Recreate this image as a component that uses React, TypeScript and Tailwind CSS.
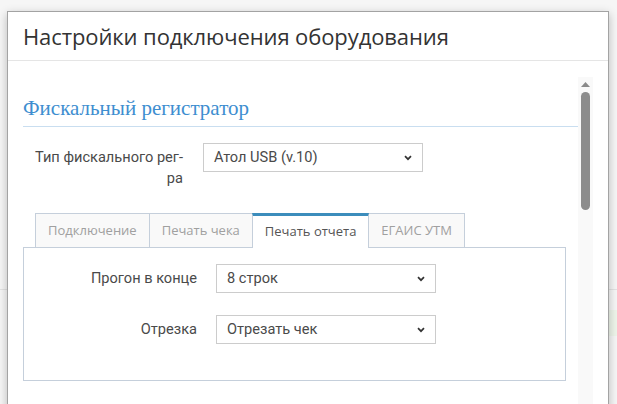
import React from "react";

// ─── Select (native look, custom chevron) ──────────────────────────────────

function Select({ value, width }: { value: string; width: string }) {
  return (
    <div className={`relative ${width} h-[29px] border border-[#cccccc] bg-white flex items-center`}>
      <span className="pl-[10px] text-[14.6px] text-[#4a4a4a] font-['Roboto',sans-serif]">{value}</span>
      <svg
        className="absolute right-[10px] top-1/2 -translate-y-1/2"
        width="8"
        height="6"
        viewBox="0 0 8 6"
        fill="none"
      >
        <path d="M1 1.2l3 3 3-3" stroke="#333" strokeWidth="1.7" />
      </svg>
    </div>
  );
}

const TABS = ["Подключение", "Печать чека", "Печать отчета", "ЕГАИС УТМ"];
const ACTIVE = 2;

export default function App() {
  return (
    <div className="relative w-[617px] h-[404px] overflow-hidden bg-[#f6f6f6] font-['Open_Sans',sans-serif]">
      {/* ── page behind the modal ─────────────────────────────────────── */}
      <div className="absolute left-0 right-0 top-[289px] h-px bg-[#e3e3e3]" />
      <div className="absolute right-0 top-[310px] w-[12px] h-[26px] bg-[#eef5ea]" />

      {/* ── Modal ─────────────────────────────────────────────────────── */}
      <div className="absolute left-[7px] top-[11px] w-[602px] h-[420px] bg-white border border-[#a3a3a3] shadow-[0_3px_9px_rgba(0,0,0,0.25)] flex flex-col">
        <div className="h-[49px] shrink-0 border-b border-[#e5e5e5] flex items-center pl-[15px]">
          <h4 className="text-[22px] leading-none text-[#333] tracking-[-0.1px]">
            Настройки подключения оборудования
          </h4>
        </div>

        <div className="flex pt-[16px] flex-1">
          <div className="w-[570px] pl-[15px] pt-[18px]">
            {/* section heading */}
            <div className="border-b border-[#c9def0] pb-[5px]">
              <h3 className="text-[21px] leading-[26px] text-[#3e8ed0] font-['Liberation_Serif',serif]">
                Фискальный регистратор
              </h3>
            </div>

            <div className="flex items-start mt-[16px]">
              <label className="w-[160px] text-right text-[14.6px] leading-[21px] text-[#4a4a4a] font-['Roboto',sans-serif] pt-[4px] pl-[8px]">
                Тип фискального рег-ра
              </label>
              <div className="ml-[20px]">
                <Select value="Атол USB (v.10)" width="w-[220px]" />
              </div>
            </div>

            {/* tabs */}
            <div className="mt-[24px] pl-[12px] flex text-[13px]">
              {TABS.map((t, i) =>
                i === ACTIVE ? (
                  <div
                    key={t}
                    className="h-[35px] px-[12px] flex items-center bg-white border-x border-[#c5cfdb] border-t-[3px] border-t-[#3c8dbc] text-[#555] -mb-px relative z-10"
                  >
                    {t}
                  </div>
                ) : (
                  <div
                    key={t}
                    className={`h-[34px] px-[12px] flex items-center bg-[#f9f9f9] border-t border-[#c5cfdb] text-[#a0a0a0] ${i === 0 || i === 1 ? "border-l" : ""} ${i === TABS.length - 1 ? "border-r" : ""}`}
                  >
                    {t}
                  </div>
                )
              )}
            </div>

            <div className="w-[543px] border border-[#c5cfdb] pt-[16px] pb-[36px] flex flex-col gap-[22px]">
              <div className="flex items-center">
                <label className="w-[173px] text-right text-[14.6px] text-[#4a4a4a] font-['Roboto',sans-serif]">
                  Прогон в конце
                </label>
                <div className="ml-[19px]">
                  <Select value="8 строк" width="w-[220px]" />
                </div>
              </div>
              <div className="flex items-center">
                <label className="w-[173px] text-right text-[14.6px] text-[#4a4a4a] font-['Roboto',sans-serif]">
                  Отрезка
                </label>
                <div className="ml-[19px]">
                  <Select value="Отрезать чек" width="w-[220px]" />
                </div>
              </div>
            </div>
          </div>

          {/* scrollbar */}
          <div className="w-[15px] bg-[#f9f9f9] flex flex-col items-center">
            <svg width="9" height="6" viewBox="0 0 9 6" className="mt-[4px]">
              <path d="M0 6L4.5 1L9 6Z" fill="#8a8a8a" />
            </svg>
            <div className="mt-[5px] w-[9px] h-[118px] rounded-full bg-[#8c8c8c]" />
          </div>
        </div>
      </div>
    </div>
  );
}
